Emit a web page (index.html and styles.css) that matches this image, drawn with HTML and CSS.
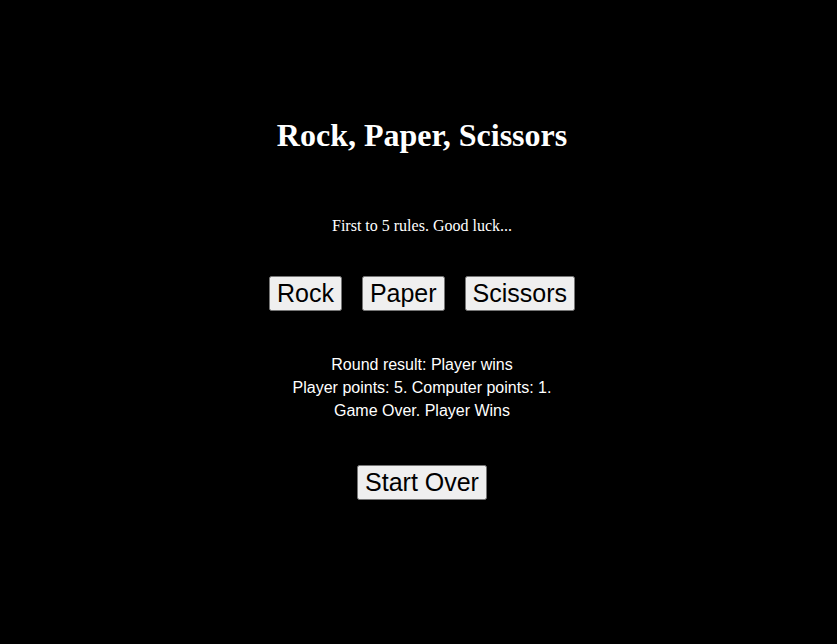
FILE: index.html
```html
<!DOCTYPE html>
<html>
<head>
<meta charset="utf-8">
<link rel="stylesheet" href="styles.css">
</head>
<body>
<main class="game">
  <h1 class="title">Rock, Paper, Scissors</h1>
  <p class="intro">First to 5 rules. Good luck...</p>
  <div class="choices">
    <button class="btn">Rock</button>
    <button class="btn">Paper</button>
    <button class="btn">Scissors</button>
  </div>
  <div class="results">
    <div>Round result: Player wins</div>
    <div>Player points: 5. Computer points: 1.</div>
    <div>Game Over. Player Wins</div>
  </div>
  <button class="btn restart">Start Over</button>
</main>
</body>
</html>
```
FILE: styles.css
```css
html, body {
  background: #000;
  margin: 0;
  padding: 0;
}
.game {
  display: flex;
  flex-direction: column;
  align-items: center;
  padding: 117px 0 0 7px;
  color: #fff;
}
.title {
  font-family: "Liberation Serif", serif;
  font-size: 32px;
  font-weight: bold;
  line-height: 37px;
  margin: 0;
}
.intro {
  font-family: "Liberation Serif", serif;
  font-size: 16px;
  line-height: 18px;
  margin: 63px 0 0;
}
.choices {
  display: flex;
  gap: 20px;
  margin-top: 41px;
}
.btn {
  font-family: "Liberation Sans", sans-serif;
  font-size: 25px;
  color: #000;
}
.results {
  font-family: "Liberation Sans", sans-serif;
  font-size: 16px;
  line-height: 23px;
  text-align: center;
  margin-top: 42px;
}
.restart {
  margin-top: 43px;
}
```
